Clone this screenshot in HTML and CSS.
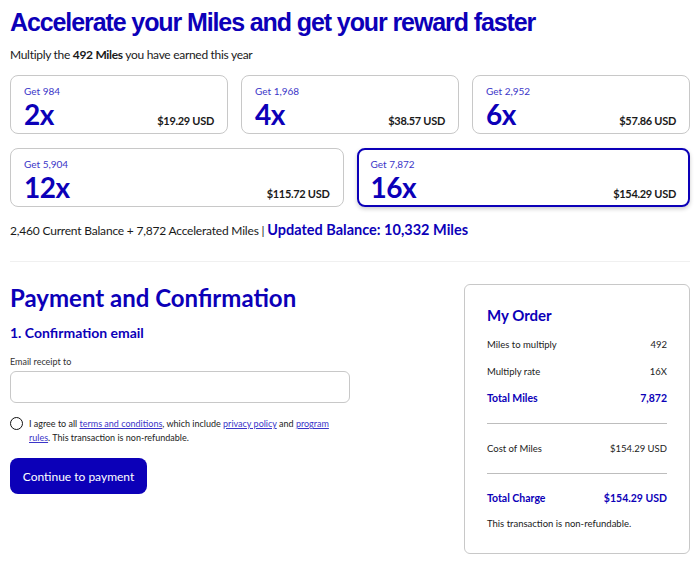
FILE: index.html
```html
<!DOCTYPE html>
<html lang="en">
<head>
    <meta charset="UTF-8">
    <meta name="viewport" content="width=device-width, initial-scale=1.0">
    <title>Accelerate your Miles</title>
    <link rel="stylesheet" href="styles.css">
</head>
<body>

    <div class="page">
        <h1 class="page-title">Accelerate your Miles and get your reward faster</h1>
        <p class="intro">Multiply the <strong>492 Miles</strong> you have earned this year</p>

        <div class="options options-top">
            <div class="option">
                <span class="option-get">Get 984</span>
                <div class="option-bottom">
                    <span class="option-rate">2x</span>
                    <span class="option-price">$19.29 USD</span>
                </div>
            </div>
            <div class="option">
                <span class="option-get">Get 1,968</span>
                <div class="option-bottom">
                    <span class="option-rate">4x</span>
                    <span class="option-price">$38.57 USD</span>
                </div>
            </div>
            <div class="option">
                <span class="option-get">Get 2,952</span>
                <div class="option-bottom">
                    <span class="option-rate">6x</span>
                    <span class="option-price">$57.86 USD</span>
                </div>
            </div>
        </div>

        <div class="options options-bottom">
            <div class="option">
                <span class="option-get">Get 5,904</span>
                <div class="option-bottom">
                    <span class="option-rate">12x</span>
                    <span class="option-price">$115.72 USD</span>
                </div>
            </div>
            <div class="option selected">
                <span class="option-get">Get 7,872</span>
                <div class="option-bottom">
                    <span class="option-rate">16x</span>
                    <span class="option-price">$154.29 USD</span>
                </div>
            </div>
        </div>

        <p class="balance">2,460 Current Balance + 7,872 Accelerated Miles | <span class="balance-updated">Updated Balance: 10,332 Miles</span></p>

        <hr class="divider">

        <div class="checkout">
            <div class="checkout-form">
                <h2>Payment and Confirmation</h2>
                <h3>1. Confirmation email</h3>
                <label for="email">Email receipt to</label>
                <input type="email" id="email" name="email">

                <div class="agree">
                    <span class="radio"></span>
                    <p>I agree to all <a href="#">terms and conditions</a>, which include <a href="#">privacy policy</a> and <a href="#">program rules</a>. This transaction is non-refundable.</p>
                </div>

                <button type="button">Continue to payment</button>
            </div>

            <div class="order">
                <h4>My Order</h4>
                <div class="order-row"><span>Miles to multiply</span><span>492</span></div>
                <div class="order-row"><span>Multiply rate</span><span>16X</span></div>
                <div class="order-row total"><span>Total Miles</span><span>7,872</span></div>
                <div class="order-line"></div>
                <div class="order-row"><span>Cost of Miles</span><span>$154.29 USD</span></div>
                <div class="order-line"></div>
                <div class="order-row total"><span>Total Charge</span><span>$154.29 USD</span></div>
                <p class="order-note">This transaction is non-refundable.</p>
            </div>
        </div>
    </div>

</body>
</html>
```

FILE: styles.css
```css
body {
    margin: 0;
    font-family: "Lato", "Noto Sans", sans-serif;
    color: #1a1a1a;
    background-color: #ffffff;
}

.page {
    padding: 0 10px;
}

.page-title {
    font-family: "Liberation Sans", Arial, sans-serif;
    font-size: 25px;
    font-weight: bold;
    letter-spacing: -1.1px;
    color: #0c00b8;
    margin: 0;
    padding-top: 7px;
    line-height: 30px;
}

.intro {
    font-size: 12px;
    letter-spacing: -0.3px;
    margin: 10px 0 0;
    line-height: 16px;
}

.intro strong {
    font-weight: 700;
}

.options {
    display: grid;
    gap: 13px;
}

.options-top {
    grid-template-columns: repeat(3, 1fr);
    margin-top: 12px;
}

.options-bottom {
    grid-template-columns: repeat(2, 1fr);
    margin-top: 14px;
}

.option {
    border: 1px solid #c8c8c8;
    border-radius: 8px;
    height: 59px;
    padding: 9px 13px 0 13px;
    box-sizing: border-box;
}

.option.selected {
    border: 2px solid #0c00b8;
    padding: 8px 12px 0 12px;
    box-shadow: 0 2px 4px rgba(0, 0, 0, 0.2);
}

.option-get {
    display: block;
    font-size: 10px;
    color: #3b35c8;
    line-height: 12px;
}

.option-bottom {
    display: flex;
    justify-content: space-between;
    align-items: baseline;
}

.option-rate {
    font-size: 28px;
    font-weight: 700;
    color: #0c00b8;
    line-height: 34px;
    letter-spacing: -0.5px;
}

.option-price {
    font-size: 11px;
    font-weight: 700;
    letter-spacing: -0.3px;
}

.balance {
    font-size: 12px;
    letter-spacing: -0.2px;
    margin: 14px 0 0;
    line-height: 18px;
}

.balance-updated {
    font-size: 14.5px;
    font-weight: 700;
    letter-spacing: 0;
    color: #0c00b8;
}

.divider {
    border: none;
    border-top: 1px solid #f0f0f0;
    margin: 21px 0 0;
}

.checkout {
    display: flex;
    justify-content: space-between;
    align-items: flex-start;
}

.checkout-form {
    width: 340px;
    padding-top: 22px;
}

h2 {
    font-size: 24px;
    font-weight: 700;
    color: #0c00b8;
    margin: 0;
    line-height: 28px;
}

h3 {
    font-size: 14px;
    font-weight: 700;
    color: #0c00b8;
    margin: 11px 0 0;
    line-height: 20px;
}

label {
    display: block;
    font-size: 9px;
    color: #333;
    margin-top: 13px;
    line-height: 12px;
}

input[type="email"] {
    display: block;
    width: 100%;
    height: 32px;
    margin-top: 3px;
    border: 1px solid #c8c8c8;
    border-radius: 6px;
    box-sizing: border-box;
}

.agree {
    display: flex;
    gap: 6px;
    margin-top: 14px;
}

.radio {
    flex: none;
    width: 11px;
    height: 11px;
    border: 1.5px solid #111;
    border-radius: 50%;
    margin-top: 0;
}

.agree p {
    margin: 0;
    font-size: 9px;
    line-height: 14px;
    color: #222;
}

.agree a {
    color: #3b35c8;
}

button {
    margin-top: 13px;
    width: 137px;
    height: 36px;
    background-color: #0c00b8;
    color: white;
    border: none;
    border-radius: 8px;
    font-family: inherit;
    font-size: 12px;
    cursor: pointer;
}

.order {
    width: 226px;
    margin-top: 22px;
    border: 1px solid #c8c8c8;
    border-radius: 6px;
    padding: 20px 22px 18px 22px;
    box-sizing: border-box;
}

h4 {
    font-size: 15px;
    font-weight: 700;
    color: #0c00b8;
    margin: 0 0 6px;
    line-height: 20px;
}

.order-row {
    display: flex;
    justify-content: space-between;
    font-size: 9.5px;
    color: #222;
    line-height: 27px;
}

.order-row.total {
    font-size: 10.5px;
    font-weight: 700;
    color: #0c00b8;
}

.order-line {
    border-top: 1.5px solid #bdbdbd;
    margin: 11px 0;
}

.order-note {
    font-size: 9.5px;
    margin: 1px 0 0;
    line-height: 22px;
}
```
